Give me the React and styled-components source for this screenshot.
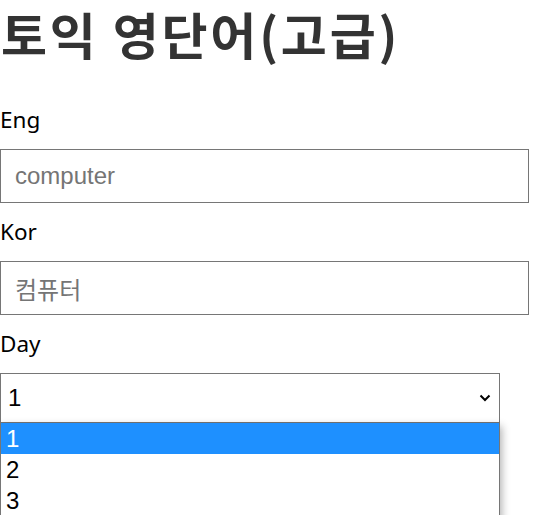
import React from "react";
import styled, { createGlobalStyle } from "styled-components";

const Global = createGlobalStyle`
  html, body { margin: 0; padding: 0; background: #fff; }
  body { font-family: "Noto Sans", "Noto Sans CJK KR", sans-serif; }
`;

const Page = styled.div`
  display: flex;
  flex-direction: column;
  width: 534px;
  height: 515px;
  overflow: hidden;
`;

const Title = styled.h1`
  margin: 0;
  padding: 0 0 0 1px;
  height: 104px;
  font-family: "Noto Sans CJK KR", sans-serif;
  font-size: 50px;
  font-weight: 700;
  line-height: 67px;
  color: #333;
  letter-spacing: 2.8px;
  white-space: nowrap;
`;

const Field = styled.div`
  display: flex;
  flex-direction: column;
  gap: 13px;
  margin-bottom: 13px;
`;

const Label = styled.label`
  font-family: "Noto Sans", "Open Sans", sans-serif;
  font-size: 22.5px;
  line-height: 32px;
  height: 32px;
  color: #000;
`;

const Input = styled.input`
  box-sizing: border-box;
  width: 529px;
  height: 54px;
  margin: 0;
  padding: 0 14px;
  border: 1px solid #767676;
  border-radius: 0;
  font-family: ${(p) => (p.$kor ? '"Noto Sans CJK KR", sans-serif' : '"Liberation Sans", Arial, sans-serif')};
  font-size: 24px;
  color: #000;
  outline: none;
  &::placeholder { color: #757575; }
`;

const SelectWrap = styled.div`
  position: relative;
  width: 500px;
`;

const SelectBox = styled.div`
  box-sizing: border-box;
  width: 500px;
  height: 50px;
  border: 1px solid #767676;
  display: flex;
  align-items: center;
  justify-content: space-between;
  padding: 0 8px 0 7px;
  font-family: "Liberation Sans", Arial, sans-serif;
  font-size: 24px;
  color: #000;
  background: #fff;
`;

const List = styled.div`
  position: absolute;
  top: 50px;
  left: 0;
  width: 500px;
  box-sizing: border-box;
  border: 1px solid #767676;
  border-top: none;
  background: #fff;
  box-shadow: 2px 3px 8px rgba(0, 0, 0, 0.3);
`;

const Option = styled.div`
  height: 31px;
  line-height: 31px;
  padding-left: 5px;
  font-family: "Liberation Sans", Arial, sans-serif;
  font-size: 24px;
  color: ${(p) => (p.$active ? "#fff" : "#000")};
  background: ${(p) => (p.$active ? "#1e90ff" : "#fff")};
`;

export default function App() {
  return (
    <Page>
      <Global />
      <Title>토익 영단어(고급)</Title>
      <Field>
        <Label>Eng</Label>
        <Input placeholder="computer" />
      </Field>
      <Field>
        <Label>Kor</Label>
        <Input $kor placeholder="컴퓨터" />
      </Field>
      <Field>
        <Label>Day</Label>
        <SelectWrap>
          <SelectBox>
            <span>1</span>
            <svg width="12" height="8" viewBox="0 0 12 8">
              <path d="M1.5 1.5 L6 6 L10.5 1.5" fill="none" stroke="#000" strokeWidth="2" />
            </svg>
          </SelectBox>
          <List>
            <Option $active>1</Option>
            <Option>2</Option>
            <Option>3</Option>
            <Option>4</Option>
          </List>
        </SelectWrap>
      </Field>
    </Page>
  );
}
